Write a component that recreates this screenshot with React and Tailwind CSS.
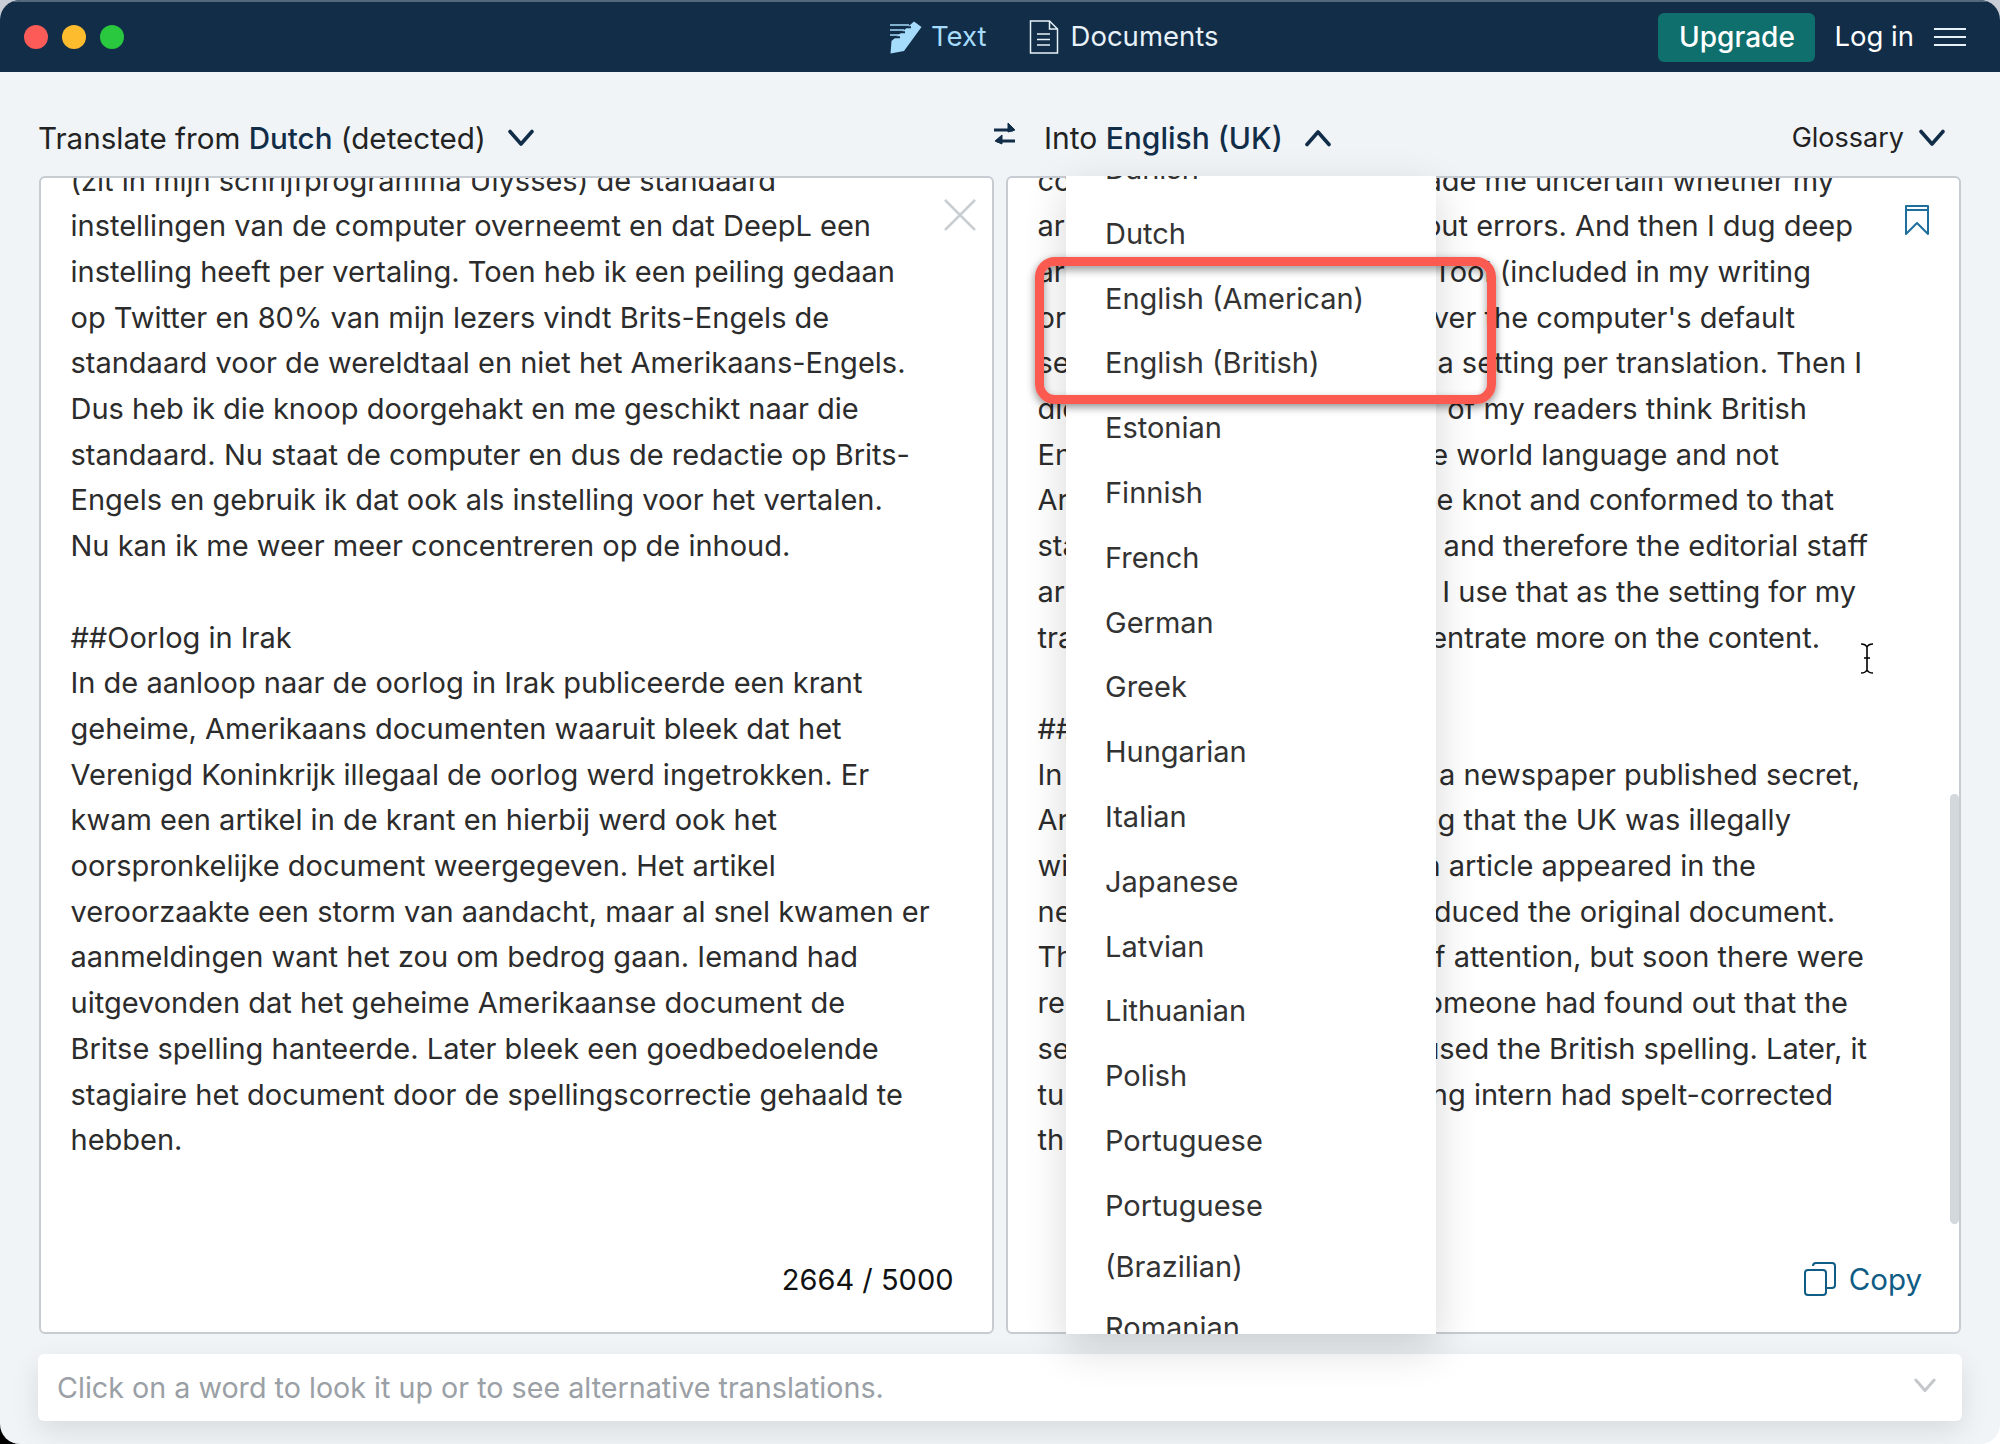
import React from "react";

const sourceLines = [
  "(zit in mijn schrijfprogramma Ulysses) de standaard",
  "instellingen van de computer overneemt en dat DeepL een",
  "instelling heeft per vertaling. Toen heb ik een peiling gedaan",
  "op Twitter en 80% van mijn lezers vindt Brits-Engels de",
  "standaard voor de wereldtaal en niet het Amerikaans-Engels.",
  "Dus heb ik die knoop doorgehakt en me geschikt naar die",
  "standaard. Nu staat de computer en dus de redactie op Brits-",
  "Engels en gebruik ik dat ook als instelling voor het vertalen.",
  "Nu kan ik me weer meer concentreren op de inhoud.",
  "\u00a0",
  "##Oorlog in Irak",
  "In de aanloop naar de oorlog in Irak publiceerde een krant",
  "geheime, Amerikaans documenten waaruit bleek dat het",
  "Verenigd Koninkrijk illegaal de oorlog werd ingetrokken. Er",
  "kwam een artikel in de krant en hierbij werd ook het",
  "oorspronkelijke document weergegeven. Het artikel",
  "veroorzaakte een storm van aandacht, maar al snel kwamen er",
  "aanmeldingen want het zou om bedrog gaan. Iemand had",
  "uitgevonden dat het geheime Amerikaanse document de",
  "Britse spelling hanteerde. Later bleek een goedbedoelende",
  "stagiaire het document door de spellingscorrectie gehaald te",
  "hebben.",
];

// the menu covers the middle of every line, so only the two visible ends are kept
// end = page x where the line stops
const targetLines = [
  { head: "com", tail: "made me uncertain whether my", end: 1835 },
  { head: "ar", tail: "without errors. And then I dug deep", end: 1854 },
  { head: "ar", tail: "LanguageTool (included in my writing", end: 1812 },
  { head: "or", tail: "over the computer's default", end: 1796 },
  { head: "se", tail: "a setting per translation. Then I", end: 1863 },
  { head: "dic", tail: "of my readers think British", end: 1808 },
  { head: "En", tail: "the world language and not", end: 1780 },
  { head: "Ar", tail: "the knot and conformed to that", end: 1835 },
  { head: "sta", tail: "and therefore the editorial staff", end: 1869 },
  { head: "ar", tail: "I use that as the setting for my", end: 1857 },
  { head: "tra", tail: "concentrate more on the content.", end: 1821 },
  { head: "\u00a0", tail: "", end: 1820 },
  { head: "##", tail: "", end: 1820 },
  { head: "In", tail: "a newspaper published secret,", end: 1861 },
  { head: "Ar", tail: "showing that the UK was illegally", end: 1792 },
  { head: "wi", tail: "An article appeared in the", end: 1757 },
  { head: "ne", tail: "reproduced the original document.", end: 1836 },
  { head: "Th", tail: "of attention, but soon there were", end: 1865 },
  { head: "re", tail: "someone had found out that the", end: 1849 },
  { head: "se", tail: "used the British spelling. Later, it", end: 1868 },
  { head: "tu", tail: "meaning intern had spelt-corrected", end: 1834 },
  { head: "th", tail: "", end: 1820 },
];

const languages = [
  "Dutch",
  "English (American)",
  "English (British)",
  "Estonian",
  "Finnish",
  "French",
  "German",
  "Greek",
  "Hungarian",
  "Italian",
  "Japanese",
  "Latvian",
  "Lithuanian",
  "Polish",
  "Portuguese",
  "Portuguese",
];

function Chevron({ up = false, className = "" }) {
  return (
    <svg className={className} viewBox="0 0 26 18" fill="none" stroke="currentColor" strokeWidth="3.6" strokeLinecap="round" strokeLinejoin="round">
      <path d={up ? "M2 15.500 13 3l11 12.500" : "M2 2.500 13 15 24 2.500"} />
    </svg>
  );
}

function PencilIcon() {
  return (
    <svg className="w-[34px] h-[34px]" viewBox="0 0 34 34" fill="#a6dcfb">
      <path d="M25 1.500 32.500 7 15 31 1.500 33.500l1-12.500z" />
      <path d="M1 5h19M1 10h14M1 15h10" stroke="#a6dcfb" strokeWidth="1.600" />
      <path d="M0 7.200h22M0 12.300h16M0 17.200h11" stroke="#112d48" strokeWidth="2" />
    </svg>
  );
}

function DocumentIcon() {
  return (
    <svg className="w-[30px] h-[34px]" viewBox="0 0 30 34" fill="none" stroke="#e8f1f8" strokeWidth="1.500">
      <path d="M1.500 1h19l8 8v24h-27z" />
      <path d="M20.500 1v8h8M8 14h13M8 19.500h13M8 25h13" />
    </svg>
  );
}

function SwapIcon() {
  return (
    <svg className="w-[24px] h-[26px] mt-[-7px]" viewBox="0 0 24 26" fill="none" stroke="#112d48" strokeWidth="3">
      <path d="M1 8h19M22 19H4" />
      <path d="M15 1l7 7-7 2zM9 13l-7 6 7 3z" fill="#112d48" strokeWidth="1" strokeLinejoin="round" />
    </svg>
  );
}

function TextCursor() {
  return (
    <svg className="w-[14px] h-[31px]" viewBox="0 0 14 31" fill="none" stroke="#000" strokeWidth="1.600">
      <path d="M1 1c3 0 5 1 6 3 1-2 3-3 6-3M7 4v23M4 15h6M1 30c3 0 5-1 6-3 1 2 3 3 6 3" />
    </svg>
  );
}

export default function App() {
  return (
    <div className="w-[2000px] h-[1444px] overflow-hidden font-['Inter',sans-serif] bg-[linear-gradient(to_bottom,#c9ced6_50%,transparent_50%),linear-gradient(to_right,#000_50%,#fff_50%)]">
      <div className="relative w-full h-full flex flex-col rounded-[20px] overflow-hidden bg-[#f0f4f7]">
        {/* Title bar */}
        <header className="h-[72px] shrink-0 bg-[#112d48] border-t-2 border-[#54687c] flex items-center pl-[24px] pr-[34px]">
          <div className="flex items-center gap-[14px] w-[865px]">
            <span className="w-[24px] h-[24px] rounded-full bg-[#fc5b57]" />
            <span className="w-[24px] h-[24px] rounded-full bg-[#fdbb2e]" />
            <span className="w-[24px] h-[24px] rounded-full bg-[#29c83f]" />
          </div>
          <nav className="flex items-center text-[27.500px]">
            <div className="flex items-center gap-[8px] text-[#a6dcfb]">
              <PencilIcon />
              <span>Text</span>
            </div>
            <div className="ml-[42px] flex items-center gap-[12px] text-[#e8f1f8]">
              <DocumentIcon />
              <span>Documents</span>
            </div>
          </nav>
          <div className="ml-auto flex items-center text-[27.500px] text-white">
            <button className="w-[157px] h-[49px] rounded-[6px] bg-[#0f6f6d] font-medium text-[28px]">Upgrade</button>
            <span className="ml-[19px]">Log in</span>
            <svg className="ml-[20px] w-[32px] h-[20px]" viewBox="0 0 32 20" stroke="#e8f1f8" strokeWidth="1.800">
              <path d="M0 2h32M0 10h32M0 18h32" />
            </svg>
          </div>
        </header>

        {/* Language labels */}
        <div className="h-[104px] shrink-0 pt-[28px] pl-[38px] pr-[55px] flex items-center text-[29.600px] text-[#222]">
          <div className="w-[955px] flex items-center">
            <span>
              Translate from <span className="font-medium text-[#112d48]">Dutch</span> (detected)
            </span>
            <Chevron className="ml-[22px] w-[26px] h-[18px] text-[#112d48]" />
          </div>
          <SwapIcon />
          <span className="ml-[27px] text-[30px]">
            Into <span className="font-medium text-[#112d48]">English (UK)</span>
          </span>
          <Chevron up className="ml-[22px] w-[26px] h-[18px] text-[#112d48]" />
          <div className="ml-auto flex items-center text-[27px]">
            <span>Glossary</span>
            <Chevron className="ml-[15px] w-[26px] h-[18px] text-[#112d48]" />
          </div>
        </div>

        {/* Panels */}
        <div className="flex gap-[12px] px-[39px] h-[1158px] shrink-0">
          <section className="relative w-[955px] bg-white border-2 border-[#c6ccd2] rounded-[6px] overflow-hidden">
            <div className="mt-[-20.500px] pl-[29.500px] text-[29px] leading-[45.700px] text-[#2c2c2c] whitespace-nowrap">
              {sourceLines.map((line, i) => (
                <div key={i}>{line}</div>
              ))}
            </div>
            <svg className="absolute top-[21px] right-[16px] w-[32px] h-[32px]" viewBox="0 0 32 32" stroke="#c9ced3" strokeWidth="2.500">
              <path d="M1 1l30 30M31 1 1 31" />
            </svg>
            <span className="absolute right-[38px] bottom-[31px] text-[29px] text-[#111]">2664 / 5000</span>
          </section>

          <section className="relative w-[956px] bg-white border-2 border-[#c6ccd2] rounded-[6px] overflow-hidden">
            <div className="mt-[-20.500px] pl-[30px] text-[29px] leading-[45.700px] text-[#2c2c2c] whitespace-nowrap">
              {targetLines.map((line, i) => (
                <div key={i} className="flex justify-between">
                  <span>{line.head}</span>
                  <span style={{ marginRight: 1960 - line.end }}>{line.tail}</span>
                </div>
              ))}
            </div>
            <svg className="absolute top-[26px] right-[29px] w-[26px] h-[32px]" viewBox="0 0 26 32" fill="none" stroke="#1f6f9c" strokeWidth="2">
              <path d="M2 2h22v28l-11-11L2 30z M2 6h22" strokeLinejoin="round" />
            </svg>
            <div className="absolute top-[616px] right-[0px] w-[9px] h-[430px] rounded-full bg-[#d2d8dc]" />
            <div className="absolute top-[465px] right-[85px]">
              <TextCursor />
            </div>
            <div className="absolute right-[37px] bottom-[31px] flex items-center gap-[13px] text-[29.500px] text-[#0f5c85]">
              <svg className="w-[32px] h-[34px]" viewBox="0 0 32 34" fill="none" stroke="currentColor" strokeWidth="2">
                <rect x="1" y="8" width="21" height="25" rx="3" />
                <path d="M9 4a3 3 0 0 1 3-3h16a3 3 0 0 1 3 3v19a3 3 0 0 1-3 3h-6" />
              </svg>
              <span>Copy</span>
            </div>
          </section>
        </div>

        {/* Dictionary bar */}
        <div className="mt-[20px] mx-[38px] h-[67px] shrink-0 bg-white rounded-[6px] shadow-[0_10px_28px_rgba(0,0,0,0.1)] flex items-center justify-between pl-[19px] pr-[26px] text-[28.700px] text-[#9aa0a5]">
          <span>Click on a word to look it up or to see alternative translations.</span>
          <Chevron className="w-[22px] h-[15px] mt-[-4px] text-[#c4c8cb]" />
        </div>

        {/* Language menu */}
        <div className="absolute left-[1066px] top-[176px] w-[370px] h-[1158px] bg-white overflow-hidden shadow-[0_14px_40px_rgba(0,0,0,0.16)] pl-[39px] text-[29px] text-[#333] whitespace-nowrap">
          <div className="mt-[-39px] h-[64.800px] leading-[64.800px]">Danish</div>
          {languages.map((lang, i) => (
            <div key={i} className="h-[64.800px] leading-[64.800px]">
              {lang}
            </div>
          ))}
          <div className="leading-[61px] mt-[-3px]">(Brazilian)</div>
          <div className="leading-[61px]">Romanian</div>
        </div>

        {/* Red annotation */}
        <div className="absolute left-[1035px] top-[257px] w-[461px] h-[147px] rounded-[20px] border-[9px] border-[#fa5a50] shadow-[0_3px_8px_rgba(0,0,0,0.45),inset_0_4px_8px_rgba(0,0,0,0.4)]" />
      </div>
    </div>
  );
}
